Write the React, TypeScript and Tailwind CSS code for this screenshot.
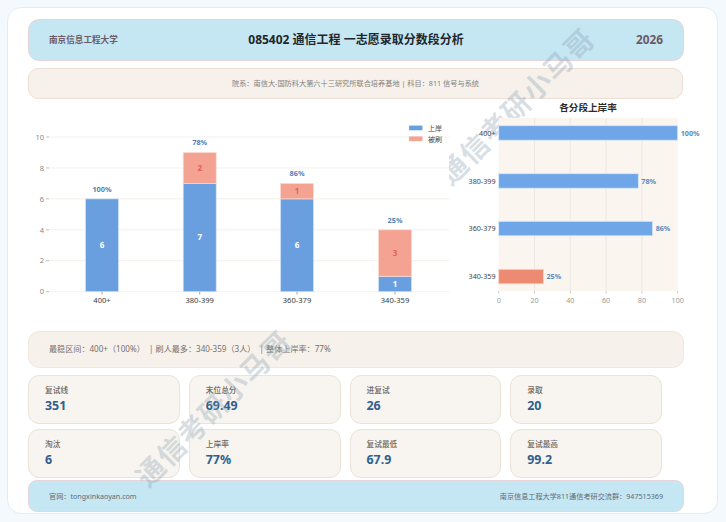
const FONT = '"Noto Sans", "Noto Sans CJK SC", sans-serif';

const cats = ["400+", "380-399", "360-379", "340-359"];
const xs = [102, 199.7, 297, 395];
const data = [
  { a: 6, b: 0, p: "100%" },
  { a: 7, b: 2, p: "78%" },
  { a: 6, b: 1, p: "86%" },
  { a: 1, b: 3, p: "25%" },
];
const U = 15.47;

function LeftChart() {
  return (
    <svg width="421" height="225" viewBox="28 100 421 225" className="block bg-white" style={{ fontFamily: FONT }}>
      {[0, 2, 4, 6, 8, 10].map((v) => {
        const y = 291.7 - v * U;
        return (
          <g key={v}>
            <line x1="49" x2="449" y1={y} y2={y} stroke="#f5f1eb" strokeWidth="1" />
            <line x1="46" x2="49" y1={y} y2={y} stroke="#999" strokeWidth="0.6" />
            <text x="44" y={y + 2.7} textAnchor="end" fontSize="7.5" fill="#888">{v}</text>
          </g>
        );
      })}
      {data.map((d, i) => {
        const x = xs[i] - 16.5;
        const ya = 291.7 - d.a * U;
        const yb = ya - d.b * U;
        return (
          <g key={i}>
            <line x1={xs[i]} x2={xs[i]} y1="291.7" y2="294.5" stroke="#666" strokeWidth="0.6" />
            <rect x={x} y={ya} width="33" height={d.a * U} fill="#6a9fdf" stroke="#d3e3f7" strokeWidth="0.7" />
            <text x={xs[i]} y={ya + (d.a * U) / 2 + 2.8} textAnchor="middle" fontSize="8" fontWeight="700" fill="#fff">{d.a}</text>
            {d.b > 0 && (
              <>
                <rect x={x} y={yb} width="33" height={d.b * U} fill="#f4a291" stroke="#fbdcd5" strokeWidth="0.7" />
                <text x={xs[i]} y={yb + (d.b * U) / 2 + 2.8} textAnchor="middle" fontSize="8" fontWeight="700" fill="#e2625c">{d.b}</text>
              </>
            )}
            <text x={xs[i]} y={yb - 7} textAnchor="middle" fontSize="7.3" fontWeight="700" fill="#4f7fb8">{d.p}</text>
            <text x={xs[i]} y="303" textAnchor="middle" fontSize="7.6" fill="#3c3c3c">{cats[i]}</text>
          </g>
        );
      })}
      <rect x="409" y="125.5" width="13.5" height="4.8" fill="#6a9fdf" stroke="#d3e3f7" strokeWidth="0.4" />
      <rect x="409" y="136.3" width="13.5" height="4.8" fill="#f4a291" stroke="#fbdcd5" strokeWidth="0.4" />
      <text x="428" y="130.5" fontSize="7" fill="#444">上岸</text>
      <text x="428" y="141.5" fontSize="7" fill="#444">被刷</text>
    </svg>
  );
}

function RightChart() {
  const X0 = 498.7;
  const S = 1.79;
  const rows = [
    { l: "400+", v: 100, y: 125.7, t: "100%", c: "#6ea6e8", s: "#d9e8f9" },
    { l: "380-399", v: 78, y: 173.7, t: "78%", c: "#6ea6e8", s: "#d9e8f9" },
    { l: "360-379", v: 86, y: 221.3, t: "86%", c: "#6ea6e8", s: "#d9e8f9" },
    { l: "340-359", v: 25, y: 269.3, t: "25%", c: "#ec8b72", s: "#f9d4c9" },
  ];
  return (
    <svg width="251" height="225" viewBox="449 100 251 225" className="block" style={{ fontFamily: FONT }}>
      <text x="588" y="110.5" textAnchor="middle" fontSize="9.6" fontWeight="700" fill="#2b2b2b">各分段上岸率</text>
      <rect x={X0} y="118" width="179" height="173" fill="#faf5ef" />
      {[0, 20, 40, 60, 80, 100].map((v) => {
        const x = X0 + v * S;
        return (
          <g key={v}>
            {v > 0 && v < 100 && <line x1={x} x2={x} y1="118" y2="291" stroke="#e9e5df" strokeWidth="0.8" />}
            <line x1={x} x2={x} y1="291" y2="293.5" stroke="#aaa" strokeWidth="0.6" />
            <text x={x} y="302.5" textAnchor="middle" fontSize="7.2" fill="#999">{v}</text>
          </g>
        );
      })}
      {rows.map((r) => (
        <g key={r.l}>
          <rect x={X0} y={r.y} width={r.v * S} height="14.5" fill={r.c} stroke={r.s} strokeWidth="0.8" />
          <text x={X0 - 3.2} y={r.y + 10} textAnchor="end" fontSize="7.2" fill="#444">{r.l}</text>
          <text x={X0 + r.v * S + 3} y={r.y + 9.8} fontSize="7.2" fontWeight="700" fill="#5b88bd">{r.t}</text>
        </g>
      ))}
    </svg>
  );
}

const stats = [
  ["复试线", "351"],
  ["末位总分", "69.49"],
  ["进复试", "26"],
  ["录取", "20"],
  ["淘汰", "6"],
  ["上岸率", "77%"],
  ["复试最低", "67.9"],
  ["复试最高", "99.2"],
];

export default function App() {
  return (
    <div className="relative w-[726px] h-[522px] overflow-hidden bg-[#f4f9fd] pt-[7px] pl-[7px]" style={{ fontFamily: FONT }}>
      <div className="w-[711px] h-[507px] rounded-[14px] border border-[#e2edf4] bg-white pt-[11px] pl-[20px] flex flex-col items-start">
        <div className="w-[656px] h-[42px] shrink-0 rounded-[11px] border border-[#e6d5d8] bg-[#c5e6f3] pl-[20px] pr-[20px] flex items-center justify-between">
          <span className="w-[100px] text-[8.6px] font-semibold text-[#6d5a62]">南京信息工程大学</span>
          <span className="text-[12px] font-bold text-[#22262b]">085402 通信工程 一志愿录取分数段分析</span>
          <span className="w-[100px] text-right text-[11.8px] font-bold text-[#6d5a64]">2026</span>
        </div>
        <div className="mt-[7px] w-[655px] h-[31px] shrink-0 rounded-[10px] border border-[#eddfd6] bg-[#f6f1eb] flex items-center justify-center">
          <span className="text-[7.2px] text-[#85807b]">院系：南信大-国防科大第六十三研究所联合培养基地 | 科目：811 信号与系统</span>
        </div>
        <div className="mt-[1px] h-[225px] shrink-0 flex">
          <div className="relative z-20"><LeftChart /></div>
          <div className="relative z-20"><RightChart /></div>
        </div>
        <div className="mt-[6px] w-[656px] h-[37px] shrink-0 rounded-[11px] border border-[#f0e8e0] bg-[#f6f1eb] pl-[20px] flex items-center">
          <span className="whitespace-pre text-[8.1px] text-[#77726d]">最稳区间：400+（100%）  | 刷人最多：340-359（3人）  | 整体上岸率：77%</span>
        </div>
        <div className="mt-[7px] w-[634px] shrink-0 grid grid-cols-4 gap-x-[9px] gap-y-[5px]">
          {stats.map(([k, v]) => (
            <div key={k} className="h-[49px] rounded-[11px] border border-[#ebe2da] bg-[#f8f4ef] pl-[16px] flex flex-col justify-center">
              <span className="text-[7.7px] leading-[11px] font-medium text-[#6f6862]">{k}</span>
              <span className="text-[12.4px] leading-[19px] font-bold text-[#2f6090]">{v}</span>
            </div>
          ))}
        </div>
        <div className="mt-[2px] w-[656px] h-[32px] shrink-0 rounded-[9px] border border-[#e6d5d8] bg-[#c5e6f3] px-[20px] flex items-center justify-between">
          <span className="text-[7.15px] leading-[10px] mb-[1px] text-[#5e6d78]">官网：tongxinkaoyan.com</span>
          <span className="text-[7.15px] leading-[10px] mb-[1px] text-[#5e6d78]">南京信息工程大学811通信考研交流群：947515369</span>
        </div>
      </div>
      <div className="absolute z-10 left-[213px] top-[408px] w-0 h-0 flex items-center justify-center">
        <span className="shrink-0 whitespace-nowrap rotate-[-45deg] text-[28px] tracking-[1.5px] font-bold text-[#8fa3b3]/35">通信考研小马哥</span>
      </div>
      <div className="absolute z-10 left-[516px] top-[106px] w-0 h-0 flex items-center justify-center">
        <span className="shrink-0 whitespace-nowrap rotate-[-45deg] text-[28px] tracking-[1.5px] font-bold text-[#8fa3b3]/35">通信考研小马哥</span>
      </div>
    </div>
  );
}
